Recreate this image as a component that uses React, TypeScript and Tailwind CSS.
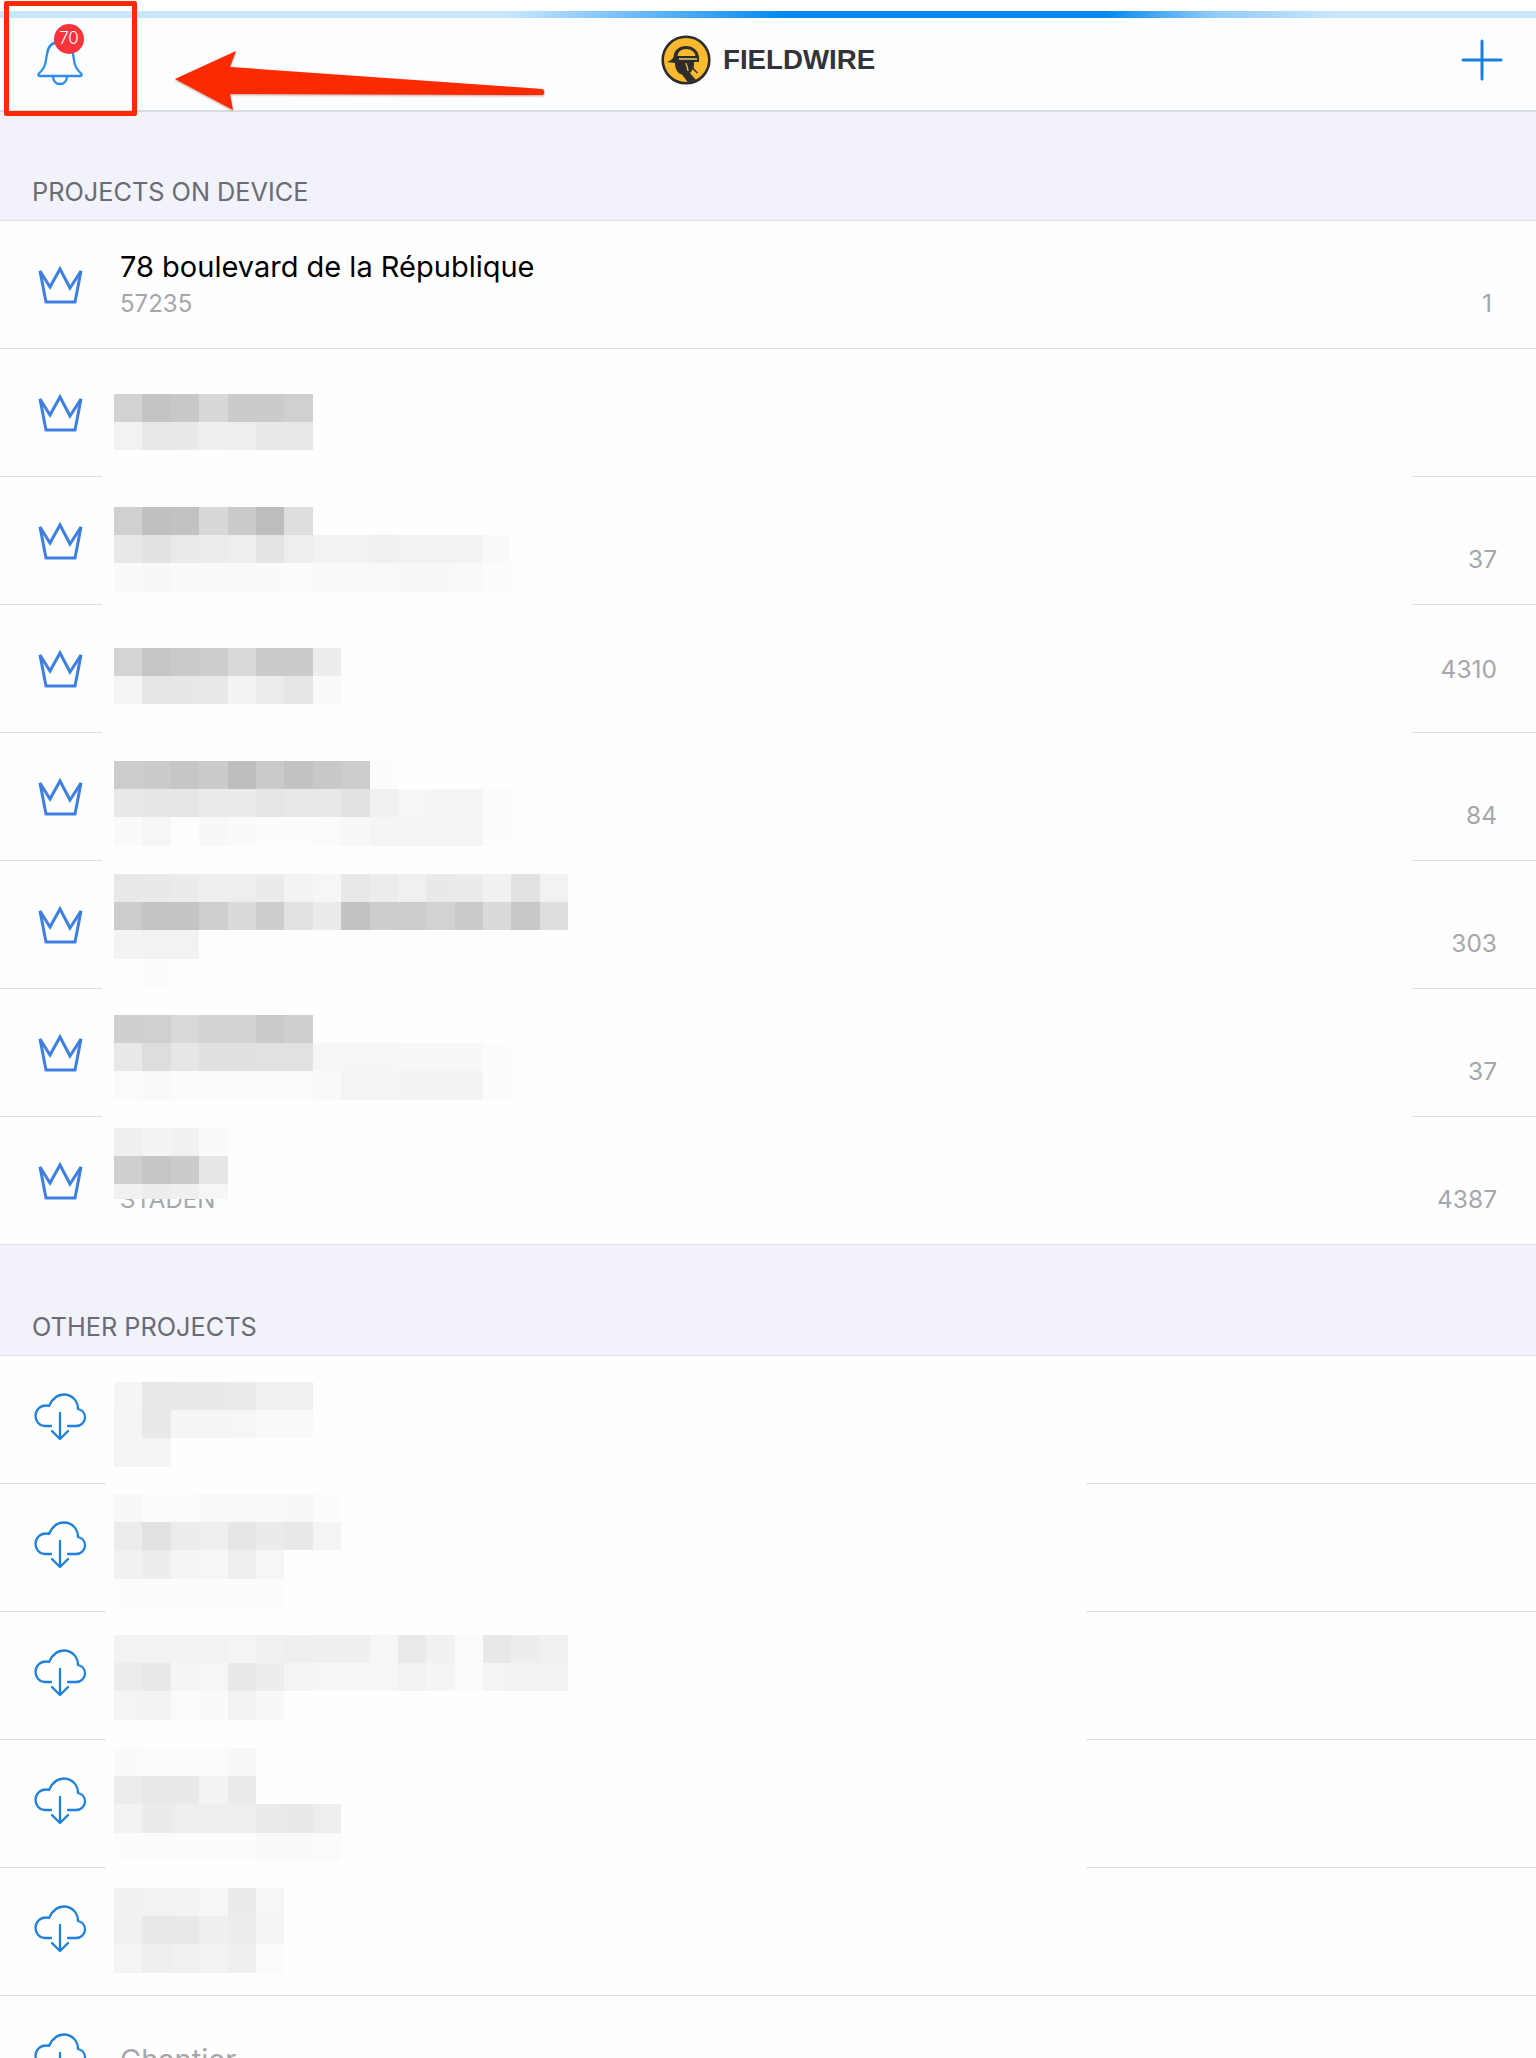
import React from "react";

type Mosaic = string[];

const crownRows: { top: number; lines: Mosaic; num?: string; down?: boolean; sub?: string; lastH?: number }[] = [
  { top: 45, lines: ["d2 c4 c8 d8 cb cb d0", "f2 e8 e9 ef ee e8 e8"] },
  { top: 30, num: "37", down: true, lines: ["d0 c0 c2 d8 cb bd dd", "e8 e2 ea ec ee e4 ee f2 f2 f0 f2 f2 f3 fa", "fa f8 fa fa f9 fa fb f9 f9 f9 f8 f8 f9 fc"] },
  { top: 43, num: "4310", lines: ["d4 c6 ca cd d9 cb cb ed", "f4 e6 e7 e8 f3 ec e6 fa"] },
  { top: 28, num: "84", down: true, lines: ["cc cb c6 cb be ca c2 c8 cc fc", "e8 e7 e6 eb eb e6 e8 e8 e2 f0 f6 f5 f5 fb", "fa f6 fd f8 fa fc fc fb f8 f5 f5 f4 f4 fc"] },
  { top: 13, num: "303", down: true, lines: ["e8 e9 eb ef ee eb f3 f6 e8 ec f0 e9 eb f1 e2 f2", "cc c4 c4 cf da cd e1 eb c2 cd cc d2 ca da c8 de", "f3 f2 f2", "fd fc fd fd fd fd fd fd fd fd fd fd fd fd fd fd"] },
  { top: 26, num: "37", down: true, lines: ["cf d0 d9 d2 d2 ca cf", "e8 dd e6 e0 e0 e1 e1 f6 f6 f6 f8 f8 f8 fc", "fb f9 fb fb fb fb fb f9 f4 f5 f3 f3 f3 fc"] },
  { top: 11, num: "4387", down: true, sub: "STADEN", lastH: 15, lines: ["ef f3 f1 fa", "cf c6 cb e6", "f1 ed ef f6"] },
];

const cloudRows: { top: number; lines: Mosaic }[] = [
  { top: 26, lines: ["f5 e8 e9 e9 ea f0 f0", "f4 e9 f5 f5 f6 f9 f9", "f4 f4"] },
  { top: 10, lines: ["f8 fc fc f9 f9 f9 f8 fc", "ec e2 ec ee e6 eb e8 f4", "f1 ed f5 f6 ee f6", "fc fc fc fc fc fc"] },
  { top: 23, lines: ["f2 f2 f3 f2 f4 f0 ee ef ef f6 ea f1 fb e8 ed f1", "ec e9 f5 f6 e9 ed f4 f6 f6 f6 f2 f5 fb f4 f2 f3", "f4 f3 fb fa f2 f8", "fe fe fe fe fe fe fd fd fd fd fd fd fd fd fd fd"] },
  { top: 8, lines: ["fa fb fc fb f8 fe", "ec e9 e9 f3 eb", "f3 eb ee ee ee ea e9 ee", "fc fc fc fc fc fa fa fb"] },
  { top: 20, lines: ["f1 f2 f3 f6 eb f6", "f0 e8 e8 ef ec f5", "f4 ee f0 f2 ee fb"] },
];

function MosaicBlock({ top, lines, lastH }: { top: number; lines: Mosaic; lastH?: number }) {
  return (
    <div className="absolute left-[114px] flex flex-col" style={{ top }}>
      {lines.map((line, i) => (
        <div key={i} className="flex" style={{ height: lastH && i === lines.length - 1 ? lastH : 28.23 }}>
          {line.split(" ").map((c, j) => (
            <div key={j} className="w-[28.4px] h-full" style={{ backgroundColor: `#${c}${c}${c}` }} />
          ))}
        </div>
      ))}
    </div>
  );
}

function Crown() {
  return (
    <svg width="80" height="80" viewBox="0 0 80 80" fill="none" className="shrink-0">
      <path d="M20 26 L30 42 L40 24 L50 43 L61 26 L55 57 H26 Z" stroke="#3d7fe3" strokeWidth="3" strokeLinejoin="miter" />
    </svg>
  );
}

function Cloud() {
  return (
    <svg width="80" height="80" viewBox="0 0 80 80" fill="none" className="shrink-0" stroke="#1f80de" strokeWidth="2.3" strokeLinecap="round" strokeLinejoin="round">
      <path d="M31 46 H25 C19.5 46 15.5 41.5 15.5 36 C15.5 30 20 25.5 26 25.5 C27 25.5 28 25.6 29 26 C32 19 37 14.5 44 14.5 C52 14.5 58 21 58 29 C62 30 65 33 65 37.5 C65 42.5 61 46 56 46 H48" />
      <path d="M40 33 V59 M32 51 L40 59 L48 51" />
    </svg>
  );
}

function Divider({ left, right }: { left?: string; right?: string }) {
  if (!left) return <div className="h-px shrink-0 bg-[#dfdfe6]" />;
  return (
    <div className="flex h-px shrink-0 justify-between">
      <div className={`${left} bg-[#dfdfe6]`} />
      <div className={`${right} bg-[#dfdfe6]`} />
    </div>
  );
}

function Row({
  icon,
  title,
  sub,
  num,
  down,
  mosaic,
  divider,
}: {
  icon: React.ReactNode;
  title?: React.ReactNode;
  sub?: string;
  num?: React.ReactNode;
  down?: boolean;
  mosaic?: React.ReactNode;
  divider: React.ReactNode;
}) {
  return (
    <div className="relative h-[128px] flex flex-col">
      <div className="flex-1 min-h-0 flex items-center pl-[20px] pr-[39px]">
        {icon}
        <div className="ml-[20px] flex-1 flex flex-col">
          {title && <div className="text-[29px] leading-[36px] text-black">{title}</div>}
          {sub && <div className="mt-[4px] mb-[2px] text-[24px] leading-[29px] text-[#a6a6ab]">{sub}</div>}
        </div>
        {num && <div className={`text-[24.5px] leading-[29px] text-[#a6a6ab] ${down ? "mt-[38px]" : "mt-[2px]"}`}>{num}</div>}
      </div>
      {divider}
      {mosaic}
    </div>
  );
}

function SectionHeader({ label, h }: { label: string; h: string }) {
  return (
    <div className={`${h} flex items-end px-[32px] pb-[14px] bg-[#f1f2fa] border-b border-[#dfdfe6]`}>
      <span className="text-[25.3px] leading-[29px] text-[#6b6b73]">{label}</span>
    </div>
  );
}

function Logo() {
  return (
    <svg width="50" height="50" viewBox="0 0 50 50" className="shrink-0">
      <circle cx="25" cy="25" r="23.3" fill="#fbb92d" stroke="#2d2d2d" strokeWidth="2.6" />
      <path d="M6 27 C9 25.5 11.5 24.5 12.5 22 C13 15 18 11 25 11 C32 11 37 15 38 22 L38 27 H33 C33.5 32 31 36 29 38 L35 45 L27 47.5 L21 39.5 C16 38.5 14 33 14 28 Z" fill="#2d2d2d" />
      <path d="M16.5 21 C17 17 20 14 25 14 C30 14 34 17 34.5 21 Z" fill="#fbb92d" />
      <path d="M18 24 H36" stroke="#e6c56a" strokeWidth="1.6" />
      <path d="M30 30 C31.5 33 33 35 36.5 38" stroke="#2d2d2d" strokeWidth="1.6" fill="none" />
      <path d="M25 28 C25.5 31 27 33 27 36" stroke="#fbb92d" strokeWidth="1.4" fill="none" />
    </svg>
  );
}

export default function App() {
  return (
    <div className="relative w-[1536px] h-[2058px] overflow-hidden bg-[#fefefe] font-['Inter','Liberation_Sans',sans-serif]">
      <div className="h-[11px] bg-white" />
      <div className="h-[7px] bg-[linear-gradient(90deg,#c9e6fd_0%,#c9e6fd_33%,#0489f1_51%,#0489f1_72%,#90cbf8_79%,#c9e6fd_87%,#c9e6fd_100%)]" />
      <header className="h-[94px] bg-[#fcfdfe] border-b-2 border-[#d9dcde] flex items-center relative">
        <div className="w-[137px] h-full flex items-center justify-center relative">
          <svg width="90" height="90" viewBox="0 0 90 90" fill="none" stroke="#2e8ce8" strokeWidth="2.3" className="absolute left-[20px] top-[-8px]">
            <path d="M18.5 64 C18 65.5 19 66 20 66 H60 C61 66 62 65.5 61.5 64 C57 60 54.5 56 54 50 L53 44 C52 36 47 32 40 32 C33 32 28 36 27 44 L26 50 C25.5 56 23 60 18.5 64 Z" />
            <path d="M33 66 C33 71 36 74 40 74 C44 74 47 71 47 66" />
          </svg>
          <div className="absolute left-[54px] top-[6px] w-[30px] h-[30px] rounded-full bg-[#f7343c] text-white text-[17px] font-light flex items-center justify-center">70</div>
        </div>
        <div className="absolute left-[661px] top-[17px] flex items-center gap-[12px]">
          <Logo />
          <span className="text-[27.7px] leading-[32px] font-bold text-[#333437] font-['Liberation_Sans',sans-serif]">FIELDWIRE</span>
        </div>
        <svg width="42" height="42" viewBox="0 0 42 42" className="absolute left-[1461px] top-[21px]" stroke="#1a7fe3" strokeWidth="3" strokeLinecap="round">
          <path d="M21 2 V40 M2 21 H40" />
        </svg>
      </header>

      <SectionHeader label="PROJECTS ON DEVICE" h="h-[109px]" />
      <Row icon={<Crown />} title="78 boulevard de la République" sub="57235" num={<span className="mr-[5px]">1</span>} down divider={<Divider />} />
      {crownRows.map((r, i) => (
        <Row
          key={i}
          icon={<Crown />}
          title={<span className="invisible">&nbsp;</span>}
          sub={r.sub}
          num={r.num}
          down={r.down}
          mosaic={<MosaicBlock top={r.top} lines={r.lines} lastH={r.lastH} />}
          divider={i === crownRows.length - 1 ? <Divider /> : <Divider left="w-[102px]" right="w-[124px]" />}
        />
      ))}

      <SectionHeader label="OTHER PROJECTS" h="h-[111px]" />
      {cloudRows.map((r, i) => (
        <Row
          key={i}
          icon={<Cloud />}
          mosaic={<MosaicBlock top={r.top} lines={r.lines} />}
          divider={i === cloudRows.length - 1 ? <Divider /> : <Divider left="w-[106px]" right="w-[450px]" />}
        />
      ))}
      <Row icon={<Cloud />} title={<span className="text-[#a6a6ab]">Chantier</span>} divider={<Divider />} />

      {/* annotation overlay */}
      <div className="absolute left-[4px] top-[1px] w-[133px] h-[115px] border-[5px] border-[#fb2a00] rounded-[2px]" />
      <svg width="400" height="80" viewBox="0 0 400 80" className="absolute left-[170px] top-[45px] drop-shadow-[0_1px_1px_rgba(120,40,20,0.45)]">
        <path d="M5 34 L66 6 L60 22 L372 44 C375 45 375 50 372 50 L60 49 L63 65 Z" fill="#fb2a00" />
      </svg>
    </div>
  );
}
